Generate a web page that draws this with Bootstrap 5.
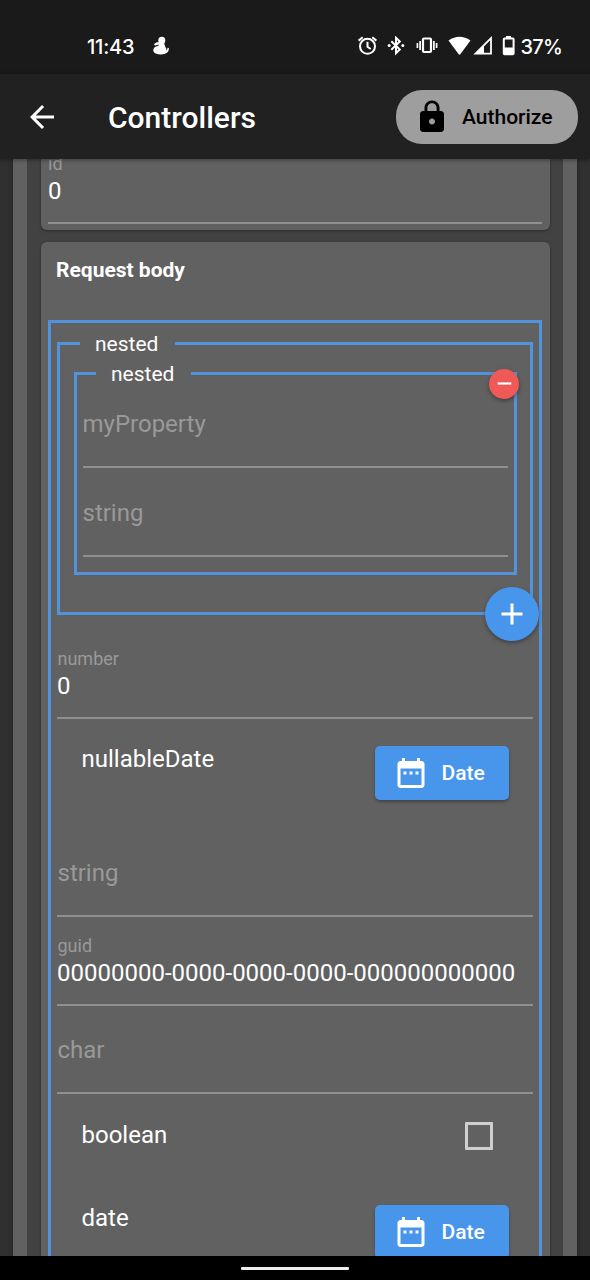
<!DOCTYPE html>
<html lang="en" data-bs-theme="dark">
<head>
<meta charset="utf-8">
<meta name="viewport" content="width=device-width, initial-scale=1">
<title>Controllers</title>
<link href="https://cdn.jsdelivr.net/npm/bootstrap@5.3.0/dist/css/bootstrap.min.css" rel="stylesheet">
<style>
  :root { --blue: #4896ec; --frame: #5193dc; --surface: #616161; --muted: #999; }
  body { font-family: Roboto, "Noto Sans", sans-serif; font-size: 24px; line-height: 28px; color: #fff; background: #303030; height: 1280px; overflow: hidden; }
  svg { display: block; flex: none; }
  .status-bar { height: 74px; background: #1a1a1a; padding: 33px 28px 0 87px; font: 500 20px/28px Inter, sans-serif; }
  .status-bar svg { margin-top: 3px; }
  .clock { width: 65px; letter-spacing: -.2px; }
  .app-bar { height: 85px; background: #212121; padding: 0 12px 0 24px; box-shadow: 0 1px 4px rgba(0,0,0,.4); z-index: 5; position: relative; }
  .app-title { font-size: 30px; font-weight: 500; line-height: 36px; margin: 2px 0 0 48px; }
  .btn-auth { width: 182px; height: 54px; border-radius: 26px; background: #9e9e9e; color: #000; font-size: 21px; font-weight: 500; padding: 0 0 0 18px; gap: 12px; }
  .btn > span { padding-top: 2px; }
  .viewport { height: 1097px; padding: 0 13px; }
  .outer-panel { background: var(--surface); padding: 0 14px; box-shadow: 0 0 4px rgba(0,0,0,.35); }
  .inner-panel { background: #424242; padding: 0 13.5px; min-height: 1200px; }
  .surface { background: var(--surface); border-radius: 6px; box-shadow: 0 1px 3px rgba(0,0,0,.35); }
  .surface.top-part { display: flow-root; height: 71px; padding: 0 7.5px; border-radius: 0 0 6px 6px; margin-bottom: 12px; }
  .top-part .field { margin-top: -24px; }
  .surface.request { padding: 0 7.5px; }
  .request-title { font-size: 21px; font-weight: 700; line-height: 28px; padding: 13.5px 0 36px 8px; }
  .frame { border: 3px solid var(--frame); padding: 0 6px; height: 1000px; }
  .group { position: relative; border: 3px solid var(--frame); }
  .group > legend { float: none; width: auto; font-size: 21px; line-height: 24px; margin: 0; padding: 0 17px 0 15px; }
  .group-a { margin-top: 9px; padding: 0 13.5px 37px; }
  .group-a > legend { margin-left: 6.5px; }
  .group-b { margin-top: 6px; padding: 0 6px 15px; }
  .group-b > legend { margin-left: 13.5px; }
  .group-b > legend + .field { margin-top: -6px; }
  .field { height: 88.5px; border-bottom: 2px solid #8f8f8f; }
  .field.hint { color: var(--muted); padding-top: 30.5px; }
  .field.filled { padding-top: 18.5px; }
  .field small { display: block; font-size: 18px; line-height: 20px; color: var(--muted); margin-bottom: 3px; }
  .frame > .field, .prop-row > span { text-indent: .5px; }
  .round { position: absolute; border-radius: 50%; box-shadow: 0 2px 4px rgba(0,0,0,.35); display: flex; align-items: center; justify-content: center; }
  .remove { width: 30px; height: 30px; right: -5.5px; bottom: 173px; background: #ef5a56; }
  .add { width: 54px; height: 54px; right: -9px; bottom: -29px; background: var(--blue); }
  .number-field { margin-top: 16px; }
  .prop-row { padding: 0 24px; }
  .prop-row > span { padding-top: 26px; }
  .date-row { height: 109.5px; }
  .date-btn { margin-top: 27px; width: 134px; height: 54px; border-radius: 5px; background: var(--blue); color: #fff; font-size: 21px; font-weight: 500; padding: 0 0 0 18px; gap: 12.5px; box-shadow: 0 2px 3px rgba(0,0,0,.3); }
  .bool-row { height: 84px; padding-right: 40px; }
  .bool-row > span { padding-top: 27px; }
  .square { width: 28px; height: 28px; margin-top: 28px; border: 3px solid #cfcfcf; border-radius: 1px; background: transparent; }
  .gesture { height: 24px; background: #000; position: relative; z-index: 5; }
  .gesture div { width: 108px; height: 3px; background: #eee; border-radius: 1px; margin-top: 1px; }
  .ms-bt { margin-left: 10px; } .ms-vib { margin-left: 11px; } .ms-wifi { margin-left: 10px; }
  .ms-sig { margin-left: 2px; } .ms-bat { margin-left: 9px; }
  .level { margin-left: 6px; letter-spacing: -.8px; }
</style>
</head>
<body class="d-flex flex-column">

<header class="status-bar d-flex align-items-start flex-shrink-0">
  <div class="clock">11:43</div>
  <svg width="18" height="20" viewBox="0 0 18 20" fill="#fff"><circle cx="9.800" cy="4.200" r="3.500"/><path d="M7.500 6h4.800q-.4 2.500.9 4.500 1.500 2 .9 4.300 1.300-.8 1.500-3l1.300.3q.3 4-3.800 5.700-4.500 1.500-9.500-.2-2.800-1.500-2.200-4.300.5-1.800 2-2.500 2.500-.4 4-2-1.600-.5-4.300.8L1.800 8.200q2.500-2.200 5.200-2.200z"/></svg>
  <div class="ms-auto d-flex">
    <svg width="20" height="20" viewBox="0 0 20 20" fill="none" stroke="#fff" stroke-width="2"><circle cx="10.500" cy="10.300" r="7.500"/><path d="M10.500 5.800v5l3.200 2.200M1.600 4.600 5.700 1.300M19.400 4.600 15.300 1.300"/></svg>
    <svg class="ms-bt" width="18" height="20" viewBox="0 0 18 20" fill="none" stroke="#fff" stroke-width="2"><path d="M4.300 5.300 12.800 13.500 9 17.200V1.800l3.800 3.700-8.500 8.200"/><circle cx="2.200" cy="9.500" r="1.500" fill="#fff" stroke="none"/><circle cx="15.800" cy="9.500" r="1.500" fill="#fff" stroke="none"/></svg>
    <svg class="ms-vib" width="22" height="20" viewBox="0 0 22 20" fill="none" stroke="#fff"><rect x="7" y="2.500" width="8" height="13.500" rx="1" stroke-width="2.200"/><path d="M4.100 5v9M17.900 5v9M1.400 7v5M20.600 7v5" stroke-width="1.700"/></svg>
    <svg class="ms-wifi" width="23" height="20" viewBox="0 0 23 20" fill="#fff"><path d="M.5 4.500Q11.500-3 22.500 4.500L12.500 18q-1 1.300-2 0z"/></svg>
    <svg class="ms-sig" width="20" height="20" viewBox="0 0 20 20"><path d="M2.500 17.600 18 2.200V17.600z" fill="none" stroke="#fff" stroke-width="1.800"/><path d="M2 18 11 8.800V18z" fill="#fff"/></svg>
    <svg class="ms-bat" width="13" height="20" viewBox="0 0 13 20"><path d="M4 0h5v2.500H4zM1.500 11.500h10V18h-10z" fill="#fff"/><rect x="1.800" y="2.500" width="9.800" height="15.700" rx=".8" fill="none" stroke="#fff" stroke-width="2"/></svg>
    <span class="level">37%</span>
  </div>
</header>

<nav class="app-bar d-flex align-items-center flex-shrink-0">
  <svg width="36" height="36" viewBox="0 0 24 24" fill="#fff"><path d="M20 11H7.830l5.590-5.590L12 4l-8 8 8 8 1.410-1.410L7.830 13H20v-2z"/></svg>
  <div class="app-title">Controllers</div>
  <button class="btn btn-auth border-0 ms-auto d-flex align-items-center">
    <svg width="36" height="36" viewBox="0 0 24 24" fill="#000"><path d="M18 8h-1V6c0-2.760-2.240-5-5-5S7 3.240 7 6v2H6c-1.100 0-2 .9-2 2v10c0 1.100.9 2 2 2h12c1.100 0 2-.9 2-2V10c0-1.100-.9-2-2-2zm-6 9c-1.100 0-2-.9-2-2s.9-2 2-2 2 .9 2 2-.9 2-2 2zm3.100-9H8.900V6c0-1.710 1.390-3.100 3.100-3.100s3.100 1.390 3.100 3.100v2z"/></svg>
    <span>Authorize</span>
  </button>
</nav>

<main class="viewport overflow-hidden flex-shrink-0">
  <div class="outer-panel">
    <div class="inner-panel">
      <section class="surface top-part">
        <div class="field filled"><small>id</small>0</div>
      </section>
      <section class="surface request">
        <div class="request-title">Request body</div>
        <div class="frame">
          <fieldset class="group group-a">
            <legend>nested</legend>
            <fieldset class="group group-b">
              <legend>nested</legend>
              <div class="field hint">myProperty</div>
              <div class="field hint">string</div>
              <div class="round remove"><svg width="15" height="15" viewBox="0 0 15 15"><path d="M.7 7.500h13.600" stroke="#fff" stroke-width="2.200"/></svg></div>
            </fieldset>
            <div class="round add"><svg width="36" height="36" viewBox="0 0 24 24" fill="#fff"><path d="M19 13h-6v6h-2v-6H5v-2h6V5h2v6h6v2z"/></svg></div>
          </fieldset>
          <div class="field filled number-field"><small>number</small>0</div>
          <div class="prop-row date-row d-flex justify-content-between align-items-start">
            <span>nullableDate</span>
            <button class="btn date-btn border-0 d-flex align-items-center">
              <svg width="36" height="36" viewBox="0 0 24 24" fill="#fff"><path d="M9 11H7v2h2v-2zm4 0h-2v2h2v-2zm4 0h-2v2h2v-2zm2-7h-1V2h-2v2H8V2H6v2H5c-1.110 0-1.990.9-1.990 2L3 20c0 1.100.89 2 2 2h14c1.100 0 2-.9 2-2V6c0-1.100-.9-2-2-2zm0 16H5V9h14v11z"/></svg>
              <span>Date</span>
            </button>
          </div>
          <div class="field hint">string</div>
          <div class="field filled"><small>guid</small>00000000-0000-0000-0000-000000000000</div>
          <div class="field hint">char</div>
          <div class="prop-row bool-row d-flex justify-content-between align-items-start">
            <span>boolean</span>
            <div class="square" role="checkbox" aria-checked="false"></div>
          </div>
          <div class="prop-row date-row d-flex justify-content-between align-items-start">
            <span>date</span>
            <button class="btn date-btn border-0 d-flex align-items-center">
              <svg width="36" height="36" viewBox="0 0 24 24" fill="#fff"><path d="M9 11H7v2h2v-2zm4 0h-2v2h2v-2zm4 0h-2v2h2v-2zm2-7h-1V2h-2v2H8V2H6v2H5c-1.110 0-1.990.9-1.990 2L3 20c0 1.100.89 2 2 2h14c1.100 0 2-.9 2-2V6c0-1.100-.9-2-2-2zm0 16H5V9h14v11z"/></svg>
              <span>Date</span>
            </button>
          </div>
        </div>
      </section>
    </div>
  </div>
</main>

<footer class="gesture d-flex align-items-center justify-content-center flex-shrink-0"><div></div></footer>

<script src="https://cdn.jsdelivr.net/npm/bootstrap@5.3.0/dist/js/bootstrap.bundle.min.js"></script>
</body>
</html>
